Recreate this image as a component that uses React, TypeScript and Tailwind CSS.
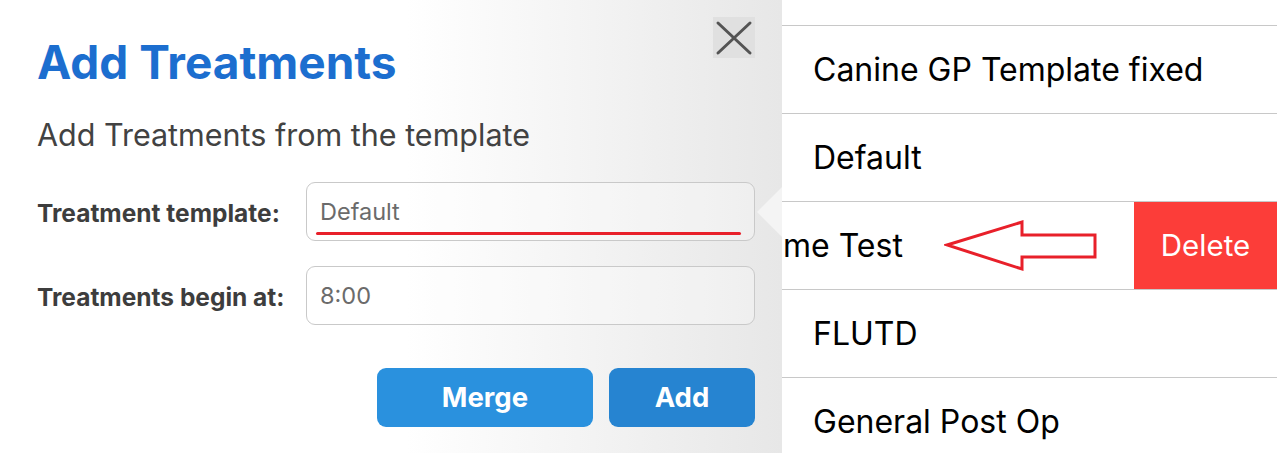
const rows = ["Canine GP Template fixed", "Default"];
const rowsAfter = ["FLUTD", "General Post Op"];

const FormRow = ({ label, value, mark }: { label: string; value: string; mark?: boolean }) => (
  <div className="flex items-center">
    <div className="w-[269px] pt-[4px] text-[24.5px] font-bold text-[#3d3d3d]">{label}</div>
    <div className="relative flex h-[59px] w-[449px] items-center rounded-[9px] border border-[#c9c9c9] bg-white/30 px-[13px] text-[23.5px] text-[#6b6b6b]">
      {value}
      {mark && (
        <div className="absolute bottom-[5px] left-[9px] h-[3px] w-[425px] rounded-full bg-[#e8202a]" />
      )}
    </div>
  </div>
);

const App = () => {
  return (
    <div
      className="flex h-[453px] w-[1277px] overflow-hidden"
      style={{ fontFamily: "Inter, 'Noto Sans', sans-serif" }}
    >
      {/* popover */}
      <div className="relative flex w-[782px] flex-col bg-linear-to-r from-white from-[52%] to-[#e7e7e7] pl-[37px] pr-[27px]">
        <div className="flex items-start justify-between pt-[17px]">
          <h1 className="pt-[21px] text-[46px] leading-[48px] font-bold text-[#1c6ecf]">
            Add Treatments
          </h1>
          <button className="flex h-[41px] w-[42px] items-center justify-center bg-[#e0e0e0]">
            <svg width="42" height="41" viewBox="0 0 42 41">
              <path d="M5 6 L37 36 M37 6 L5 36" stroke="#545454" strokeWidth="3" strokeLinecap="round" />
            </svg>
          </button>
        </div>
        <p className="mt-[31px] text-[30.5px] leading-[36px] text-[#424242]">
          Add Treatments from the template
        </p>
        <div className="mt-[29px] flex flex-col gap-[25px]">
          <FormRow label="Treatment template:" value="Default" mark />
          <FormRow label="Treatments begin at:" value="8:00" />
        </div>
        <div className="mt-[43px] flex justify-end gap-[16px]">
          <button className="h-[59px] w-[216px] rounded-[9px] bg-[#2a91de] text-[27.5px] font-bold text-white">
            Merge
          </button>
          <button className="h-[59px] w-[146px] rounded-[9px] bg-[#2684d1] text-[27.5px] font-bold text-white">
            Add
          </button>
        </div>
        {/* popover arrow */}
        <div className="absolute right-0 top-[187px] h-0 w-0 border-y-[25px] border-r-[25px] border-y-transparent border-r-[#f4f4f4]" />
      </div>

      {/* template list */}
      <div className="flex flex-1 flex-col bg-white text-[32px] text-black">
        <div className="h-[26px] shrink-0 border-b border-[#c8c8c8]" />
        {rows.map((r) => (
          <div key={r} className="flex h-[88px] shrink-0 items-center border-b border-[#c8c8c8] pl-[31px]">
            {r}
          </div>
        ))}
        <div className="relative flex h-[88px] shrink-0 items-center border-b border-[#c8c8c8]">
          <span className="pl-[1px]">me Test</span>
          <svg className="absolute left-[162px] top-[18px]" width="155" height="52" viewBox="0 0 155 52">
            <path
              d="M3 25 L78 2 L78 15 L151 15 L151 37 L78 37 L78 49 Z"
              fill="none"
              stroke="#e8202a"
              strokeWidth="3"
              strokeLinejoin="miter"
            />
          </svg>
          <div className="ml-auto flex h-full w-[143px] items-center justify-center bg-[#fc3d39] text-[29.5px] text-white">
            Delete
          </div>
        </div>
        {rowsAfter.map((r) => (
          <div key={r} className="flex h-[88px] shrink-0 items-center border-b border-[#c8c8c8] pl-[31px]">
            {r}
          </div>
        ))}
      </div>
    </div>
  );
};

export default App;
